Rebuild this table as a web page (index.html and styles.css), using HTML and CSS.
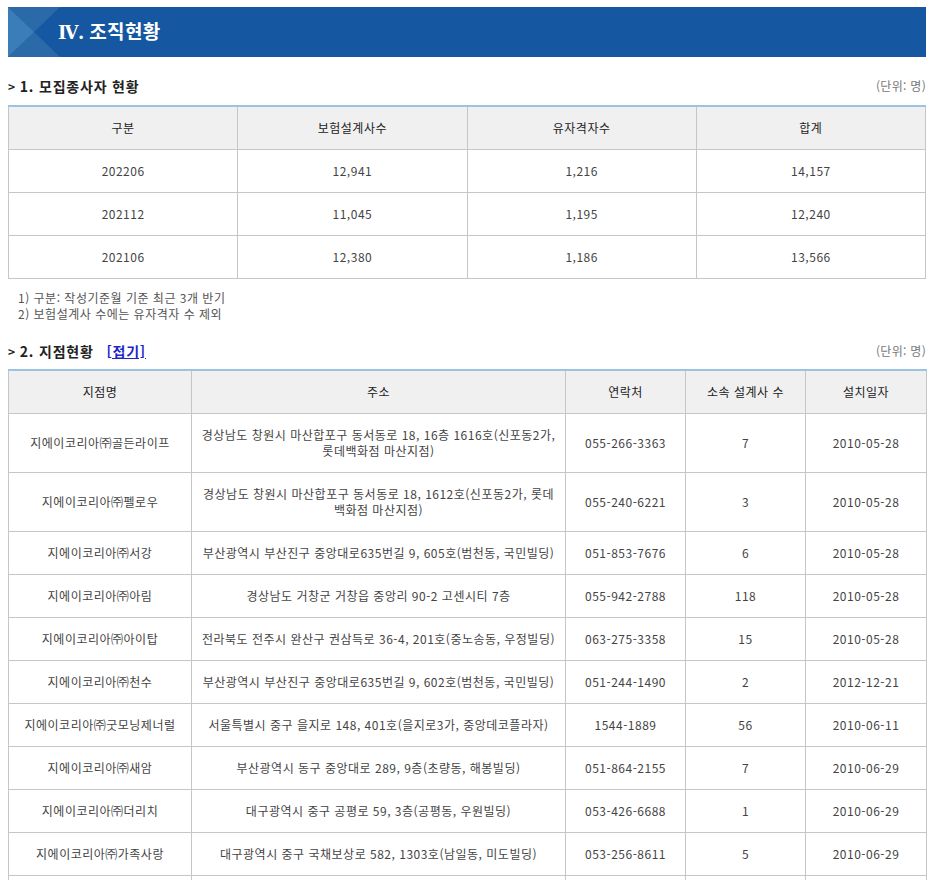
FILE: index.html
```html
<!DOCTYPE html>
<html lang="ko">
<head>
<meta charset="utf-8">
<title>조직현황</title>
<link rel="stylesheet" href="styles.css">
</head>
<body>
<div class="page">
  <div class="banner">
    <svg class="banner-deco" width="52" height="50" viewBox="0 0 52 50" aria-hidden="true">
      <polygon points="0,0 52,0 26,25" fill="#2b6aa9"/>
      <polygon points="0,50 52,50 26,25" fill="#2b6aa9"/>
      <polygon points="0,0 26,25 0,50" fill="#3b7db8"/>
    </svg>
    <h1 class="banner-title"><span class="roman">Ⅳ.</span> 조직현황</h1>
  </div>

  <div class="sec-head">
    <h2 class="sec-title"><span class="gt">&gt;</span> 1. 모집종사자 현황</h2>
    <span class="unit">(단위: 명)</span>
  </div>
  <table class="grid grid-4">
    <thead>
      <tr><th>구분</th><th>보험설계사수</th><th>유자격자수</th><th>합계</th></tr>
    </thead>
    <tbody>
      <tr><td>202206</td><td>12,941</td><td>1,216</td><td>14,157</td></tr>
      <tr><td>202112</td><td>11,045</td><td>1,195</td><td>12,240</td></tr>
      <tr><td>202106</td><td>12,380</td><td>1,186</td><td>13,566</td></tr>
    </tbody>
  </table>
  <ul class="notes">
    <li>1) 구분: 작성기준월 기준 최근 3개 반기</li>
    <li>2) 보험설계사 수에는 유자격자 수 제외</li>
  </ul>

  <div class="sec-head sec-head-2">
    <h2 class="sec-title"><span class="gt">&gt;</span> 2. 지점현황 <a class="fold" href="#">[접기]</a></h2>
    <span class="unit">(단위: 명)</span>
  </div>
  <table class="grid grid-5">
    <colgroup>
      <col class="c-name"><col class="c-addr"><col class="c-tel"><col class="c-cnt"><col class="c-date">
    </colgroup>
    <thead>
      <tr><th>지점명</th><th>주소</th><th>연락처</th><th>소속 설계사 수</th><th>설치일자</th></tr>
    </thead>
    <tbody>
      <tr><td>지에이코리아㈜골든라이프</td><td>경상남도 창원시 마산합포구 동서동로 18, 16층 1616호(신포동2가, 롯데백화점 마산지점)</td><td>055-266-3363</td><td>7</td><td>2010-05-28</td></tr>
      <tr><td>지에이코리아㈜펠로우</td><td>경상남도 창원시 마산합포구 동서동로 18, 1612호(신포동2가, 롯데백화점 마산지점)</td><td>055-240-6221</td><td>3</td><td>2010-05-28</td></tr>
      <tr><td>지에이코리아㈜서강</td><td>부산광역시 부산진구 중앙대로635번길 9, 605호(범천동, 국민빌딩)</td><td>051-853-7676</td><td>6</td><td>2010-05-28</td></tr>
      <tr><td>지에이코리아㈜아림</td><td>경상남도 거창군 거창읍 중앙리 90-2 고센시티 7층</td><td>055-942-2788</td><td>118</td><td>2010-05-28</td></tr>
      <tr><td>지에이코리아㈜아이탑</td><td>전라북도 전주시 완산구 권삼득로 36-4, 201호(중노송동, 우정빌딩)</td><td>063-275-3358</td><td>15</td><td>2010-05-28</td></tr>
      <tr><td>지에이코리아㈜천수</td><td>부산광역시 부산진구 중앙대로635번길 9, 602호(범천동, 국민빌딩)</td><td>051-244-1490</td><td>2</td><td>2012-12-21</td></tr>
      <tr><td>지에이코리아㈜굿모닝제너럴</td><td>서울특별시 중구 을지로 148, 401호(을지로3가, 중앙데코플라자)</td><td>1544-1889</td><td>56</td><td>2010-06-11</td></tr>
      <tr><td>지에이코리아㈜새암</td><td>부산광역시 동구 중앙대로 289, 9층(초량동, 해봉빌딩)</td><td>051-864-2155</td><td>7</td><td>2010-06-29</td></tr>
      <tr><td>지에이코리아㈜더리치</td><td>대구광역시 중구 공평로 59, 3층(공평동, 우원빌딩)</td><td>053-426-6688</td><td>1</td><td>2010-06-29</td></tr>
      <tr><td>지에이코리아㈜가족사랑</td><td>대구광역시 중구 국채보상로 582, 1303호(남일동, 미도빌딩)</td><td>053-256-8611</td><td>5</td><td>2010-06-29</td></tr>
      <tr><td>&nbsp;</td><td>&nbsp;</td><td>&nbsp;</td><td>&nbsp;</td><td>&nbsp;</td></tr>
    </tbody>
  </table>
</div>
</body>
</html>
```

FILE: styles.css
```css
* { box-sizing: border-box; }

html, body {
  margin: 0;
  padding: 0;
  background: #fff;
}

body {
  font-family: "Noto Sans CJK KR", "Noto Sans", sans-serif;
  font-size: 12px;
  color: #444;
  letter-spacing: 0.5px;
}

.page {
  width: 934px;
  padding: 7px 8px 0 8px;
}

.banner {
  height: 50px;
  background: #1557a1;
  display: flex;
  align-items: center;
}

.banner-deco {
  display: block;
  flex: none;
}

.banner-title {
  margin: 0 0 0 -2px;
  color: #fff;
  font-size: 19px;
  font-weight: bold;
  line-height: 24px;
  letter-spacing: 0.3px;
}

.roman {
  font-family: "DejaVu Serif", "Liberation Serif", serif;
  font-size: 18px;
  letter-spacing: -0.5px;
}

.sec-head {
  display: flex;
  justify-content: space-between;
  align-items: center;
  margin-top: 19px;
  margin-bottom: 9px;
  height: 20px;
}

.sec-head-2 {
  margin-top: 19px;
  margin-bottom: 8px;
}

.sec-title {
  margin: 0;
  font-size: 14px;
  font-weight: bold;
  color: #222;
  line-height: 20px;
  letter-spacing: 0.8px;
}

.gt {
  font-size: 12px;
  font-weight: bold;
  letter-spacing: 0;
}

.fold {
  color: #1b27c9;
  text-decoration: underline;
  margin-left: 8px;
}

.unit {
  font-size: 12px;
  color: #777;
  line-height: 20px;
  letter-spacing: 0.3px;
}

.grid {
  width: 918px;
  border-collapse: collapse;
  table-layout: fixed;
}

.grid th,
.grid td {
  border: 1px solid #c6c6c6;
  text-align: center;
  vertical-align: middle;
  padding: 13px 8px;
  line-height: 16px;
  font-size: 12px;
}

.grid th {
  background: #f0f0f0;
  color: #222;
  font-weight: normal;
}

.grid tr:first-child th {
  border-top: 2px solid #9dc3e4;
}

.grid td {
  color: #444;
}

.c-name { width: 183px; }
.c-addr { width: 374px; }
.c-tel { width: 120px; }
.c-cnt { width: 120px; }
.c-date { width: 121px; }

.notes {
  list-style: none;
  margin: 11px 0 0 0;
  padding: 0 0 0 10px;
  color: #555;
  line-height: 16px;
}
```
